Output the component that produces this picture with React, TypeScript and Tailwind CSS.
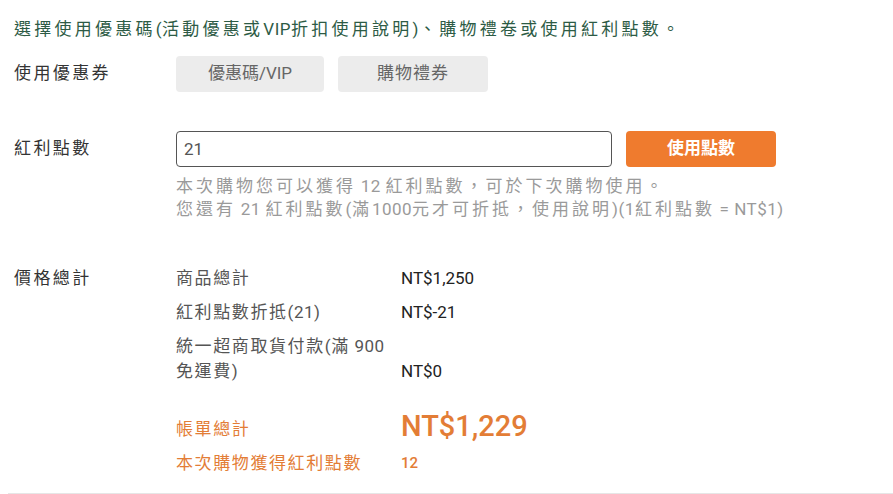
const font = { fontFamily: '"Roboto", "Noto Sans CJK TC", sans-serif' };

// latin runs keep tighter spacing than the CJK text around them
function L({ children }: { children: React.ReactNode }) {
  return <span className="tracking-[0.5px]">{children}</span>;
}

function PriceRow({
  label,
  value,
  labelClass = "text-[#555]",
  valueClass = "text-[17px] leading-[25px] text-[#222]",
  className = "",
}: {
  label: React.ReactNode;
  value: string;
  labelClass?: string;
  valueClass?: string;
  className?: string;
}) {
  return (
    <div className={`flex items-end ${className}`}>
      <div className={`w-[225px] pr-[8px] text-[17px] leading-[25px] tracking-[1.6px] ${labelClass}`}>
        {label}
      </div>
      <div className={valueClass}>{value}</div>
    </div>
  );
}

export default function App() {
  return (
    <div className="w-[893px] h-[494px] bg-white overflow-hidden" style={font}>
      <div className="pl-[14px] pt-[17px]">
        <p className="text-[17px] leading-[24px] tracking-[3.25px] text-[#2d5b45]">
          選擇使用優惠碼<L>(</L>活動優惠或<L>VIP</L>折扣使用說明<L>)</L>、購物禮卷或使用紅利點數。
        </p>

        {/* 優惠券 */}
        <div className="flex items-center mt-[15px]">
          <div className="w-[162px] text-[17px] tracking-[2.4px] text-[#333]">使用優惠券</div>
          <div className="flex gap-[14px]">
            <button className="w-[148px] h-[36px] rounded-[4px] bg-[#ececec] text-[17px] text-[#666]">
              優惠碼/VIP
            </button>
            <button className="w-[150px] h-[36px] rounded-[4px] bg-[#ececec] text-[17px] tracking-[1px] text-[#666]">
              購物禮券
            </button>
          </div>
        </div>

        {/* 紅利點數 */}
        <div className="flex mt-[39px]">
          <div className="w-[162px] h-[36px] flex items-center text-[17px] tracking-[2.4px] text-[#333]">
            紅利點數
          </div>
          <div>
            <div className="flex gap-[14px]">
              <input
                readOnly
                value="21"
                className="w-[436px] h-[36px] rounded-[4px] border border-[#555] px-[7px] text-[17px] text-[#555] outline-none"
              />
              <button className="w-[150px] h-[36px] rounded-[4px] bg-[#ef7b2e] text-white text-[17px] font-bold">
                使用點數
              </button>
            </div>
            <div className="mt-[8px] text-[17px] leading-[23px] tracking-[3px] text-[#9a9a9a]">
              <p>
                本次購物您可以獲得<L> 12 </L>紅利點數，可於下次購物使用。
              </p>
              <p>
                您還有<L> 21 </L>紅利點數<L>(</L>滿<L>1000</L>元才可折抵，使用說明<L>)(1</L>紅利點數
                <L> = NT$1)</L>
              </p>
            </div>
          </div>
        </div>

        {/* 價格總計 */}
        <div className="flex mt-[45px]">
          <div className="w-[162px] text-[17px] leading-[25px] tracking-[2.4px] text-[#333]">價格總計</div>
          <div className="flex flex-col">
            <PriceRow label="商品總計" value="NT$1,250" />
            <PriceRow
              className="mt-[9px]"
              label={
                <>
                  紅利點數折抵<L>(21)</L>
                </>
              }
              value="NT$-21"
            />
            <PriceRow
              className="mt-[9px]"
              label={
                <>
                  統一超商取貨付款<L>(</L>滿<L> 900 </L>免運費<L>)</L>
                </>
              }
              value="NT$0"
            />
            <PriceRow
              className="mt-[26px]"
              label="帳單總計"
              labelClass="text-[#e37d36]"
              value="NT$1,229"
              valueClass="text-[29px] leading-[32px] font-medium text-[#e37d36]"
            />
            <PriceRow
              className="mt-[9px]"
              label="本次購物獲得紅利點數"
              labelClass="text-[#e37d36]"
              value="12"
              valueClass="text-[15px] leading-[25px] font-medium text-[#e37d36]"
            />
          </div>
        </div>
      </div>
      <div className="mt-[17px] ml-[8px] border-t border-[#e6e6e6]" />
    </div>
  );
}
